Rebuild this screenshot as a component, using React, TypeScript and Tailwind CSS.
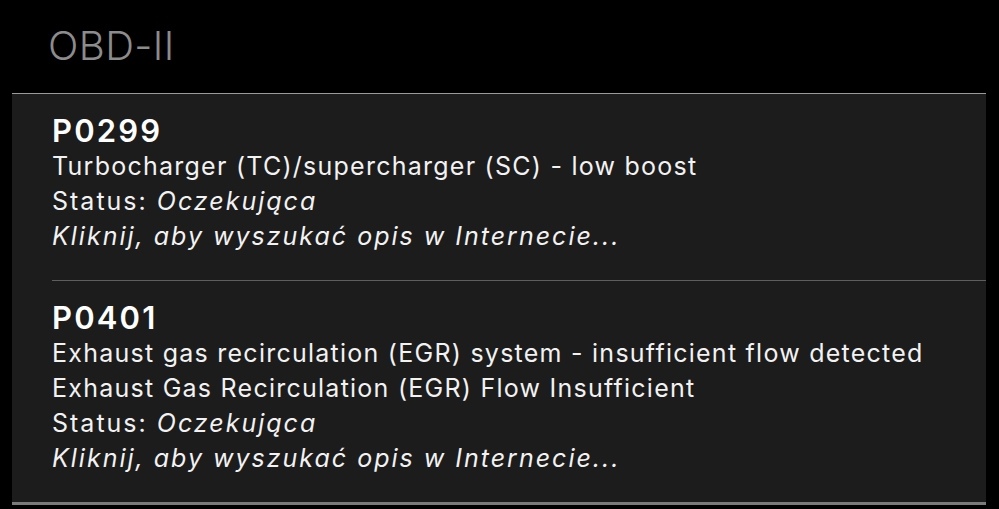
const codes = [
  {
    code: "P0299",
    lines: ["Turbocharger (TC)/supercharger (SC) - low boost"],
  },
  {
    code: "P0401",
    lines: [
      "Exhaust gas recirculation (EGR) system - insufficient flow detected",
      "Exhaust Gas Recirculation (EGR) Flow Insufficient",
    ],
  },
];

const CodeRow = ({ code, lines }: { code: string; lines: string[] }) => (
  <div className="ml-[40px] pt-[19px] pb-[26px] border-b border-[#5e5e5e] last:border-b-0">
    <div className="text-[31px] leading-[36px] font-semibold tracking-[0.07em] text-white">{code}</div>
    <div className="text-[25px] leading-[35px] tracking-[0.05em] text-[#f2f2f2]">
      {lines.map((l) => (
        <div key={l}>{l}</div>
      ))}
      <div className="tracking-[0.08em]">
        Status: <span className="italic">Oczekująca</span>
      </div>
      <div className="italic tracking-[0.08em]">Kliknij, aby wyszukać opis w Internecie...</div>
    </div>
  </div>
);

export default function App() {
  return (
    <div className="w-[999px] h-[509px] bg-black overflow-hidden font-['Inter',sans-serif]">
      <div className="h-[93px] pl-[48px] pt-[22px]">
        <h1 className="text-[40px] leading-[48px] font-light tracking-[0.01em] text-[#8c8c8c]">OBD-II</h1>
      </div>
      <div className="ml-[12px] w-[974px] bg-[#1c1c1c] border-t border-b-[3px] border-t-[#9a9a9a] border-b-[#7a7a7a]">
        {codes.map((c) => (
          <CodeRow key={c.code} code={c.code} lines={c.lines} />
        ))}
      </div>
    </div>
  );
}
